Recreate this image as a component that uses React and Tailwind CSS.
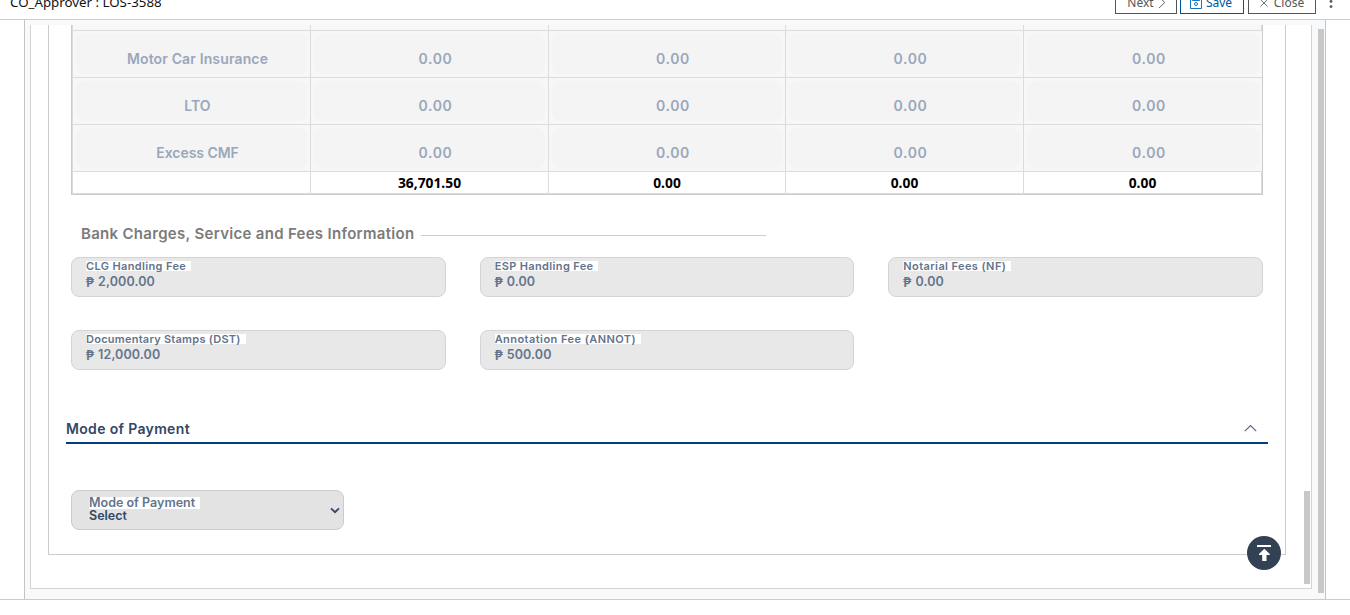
const rows = ['Motor Car Insurance', 'LTO', 'Excess CMF'];
const rowTracking = ['tracking-[0.14px]', 'tracking-[0.1px]', 'tracking-[-0.05px]'];
const totals = ['36,701.50', '0.00', '0.00', '0.00'];
const fees = [
  ['CLG Handling Fee', '2,000.00', 'tracking-[0.36px]'],
  ['ESP Handling Fee', '0.00', 'tracking-[0.36px]'],
  ['Notarial Fees (NF)', '0.00', 'tracking-[0.4px]'],
  ['Documentary Stamps (DST)', '12,000.00', 'tracking-[0.25px]'],
  ['Annotation Fee (ANNOT)', '500.00', 'tracking-[0.45px]'],
];
const columns = 'grid grid-cols-[238px_238px_237px_238px_238px]';

function Cell({ children, tracking, last }) {
  return (
    <div className={`h-full border-[#dcdcdd] bg-[#f7f7f7] px-[3px] pt-[3px] pb-[3px] ${last ? '' : 'border-r'}`}>
      <div className="h-[40px] rounded-lg bg-[#f4f4f4] pt-[14px] pl-[12px] text-center">
        <span className={`block text-[14px] leading-[22px] font-semibold text-[#9aa7bb] ${tracking}`}>{children}</span>
      </div>
    </div>
  );
}

function TopBar() {
  return (
    <header className="flex h-5 shrink-0 items-start justify-between overflow-hidden border-b border-[#cccccc] font-['Noto_Sans',sans-serif]">
      <h1 className="-mt-[10px] ml-[10px] text-[13.3px] leading-[24px] text-[#111]">CO_Approver : LOS-3588</h1>
      <div className="-mt-[10px] flex pr-[17px] text-[12px]">
        <button className="mr-[3px] flex h-6 w-[62px] items-center justify-center gap-[4px] border border-[#555] pt-px pl-px text-[#555]">
          Next
          <svg width="8" height="13" viewBox="0 0 8 13" fill="none" stroke="currentColor" strokeWidth="0.9"><path d="M1 1 6.800 6.500 1 12" /></svg>
        </button>
        <button className="mr-1 flex h-6 w-[64px] items-center justify-center gap-[4px] border border-[#005596] pt-px pr-[2px] text-[#005596]">
          <svg width="12" height="12" viewBox="0 0 12 12" fill="none" stroke="#1677bd"><path d="M.5.5h11v11H.5zM2.500.5v3h7v-3" /><circle cx="6" cy="7" r="1.500" /></svg>
          Save
        </button>
        <button className="flex h-6 w-[68px] items-center justify-center gap-[6px] border border-[#555] pt-px text-[#555]">
          <svg width="8" height="8" viewBox="0 0 8 8" stroke="currentColor" strokeWidth="0.8"><path d="m.4.4 7.2 7.2M7.6.4.4 7.6" /></svg>
          Close
        </button>
        <svg className="ml-[13px]" width="4" height="24" viewBox="0 0 4 24" fill="#555"><circle cx="2" cy="6" r="1.4" /><circle cx="2" cy="11.400" r="1.4" /><circle cx="2" cy="16.600" r="1.4" /></svg>
      </div>
    </header>
  );
}

function FeeTable() {
  return (
    <div className="ml-[22px] h-[170px] w-[1192px] border-r border-b border-l border-[#cccccc]">
      <div className="h-[169px] border-r border-b border-l border-[#dcdcdd]">
        <div className={`${columns} h-[6px] border-b border-[#dcdcdd] bg-[#f7f7f7]`}>
          {[0, 1, 2, 3].map((i) => <div key={i} className="border-r border-[#dcdcdd]" />)}
        </div>
        {rows.map((name, i) => (
          <div key={name} className={`${columns} h-[47px] border-b border-[#dcdcdd]`}>
            <Cell tracking={rowTracking[i]}>{name}</Cell>
            {[0, 1, 2, 3].map((c) => <Cell key={c} tracking="tracking-[0.6px]" last={c === 3}>0.00</Cell>)}
          </div>
        ))}
        <div className={`${columns} h-[21px] font-['Noto_Sans',sans-serif] text-[13.8px] leading-[22px] font-bold text-black`}>
          <div className="border-r border-[#dcdcdd]" />
          {totals.map((t, i) => <div key={i} className={`border-[#dcdcdd] text-center ${i < 3 ? 'border-r' : 'pr-px'}`}>{t}</div>)}
        </div>
      </div>
    </div>
  );
}

export default function App() {
  return (
    <div className="flex h-[615px] w-[1350px] flex-col overflow-hidden bg-white font-['Inter',sans-serif] whitespace-nowrap">
      <TopBar />
      <div className="flex h-[580px] border-b border-[#cccccc] pl-6">
        <div className="flex w-[1302px] border-x border-[#c4c4c4] bg-[#f8f9fb] pt-[5px] pl-[5px]">
          <div className="relative flex h-[564px] w-[1282px] shrink-0 border-x border-b border-[#d2d3d5] bg-white pl-[17px]">
            <main className="h-[530px] w-[1238px] border-x border-b border-[#cccccc]">
              <FeeTable />
              <div className="mt-[28px] ml-[32px] flex h-[22px] items-center">
                <h2 className="w-[340px] text-[15px] leading-[22px] font-semibold tracking-[0.3px] text-[#7b7b7b]">Bank Charges, Service and Fees Information</h2>
                <div className="mt-[2px] h-px w-[345px] bg-[#cccccc]" />
              </div>
              <div className="mt-[12px] ml-[22px] grid w-[1192px] grid-cols-3 gap-x-[34px] gap-y-[33px]">
                {fees.map(([label, value, tracking]) => (
                  <div key={label} className="flex h-10 flex-col items-start rounded-lg border border-[#d4d4d4] bg-[#e8e8e8] pt-[3px] pl-[14px] text-[#64748b]">
                    <span className={`h-[10px] bg-white pr-[5px] text-[11px] leading-[10px] font-semibold ${tracking}`}>{label}</span>
                    <span className="mt-[2px] flex gap-[4px] text-[12.5px] leading-[18px] font-semibold tracking-[0.1px]">
                      <span className="font-['Noto_Sans',sans-serif] text-[14px]">₱</span>
                      {value}
                    </span>
                  </div>
                ))}
              </div>
              <div className="mt-[48px] ml-[17px] flex h-[26px] w-[1202px] items-start justify-between border-b-2 border-[#003e7e]">
                <h2 className="text-[14px] leading-[22px] font-semibold tracking-[0.34px] text-[#334766]">Mode of Payment</h2>
                <svg className="mt-[6px] mr-[11px]" width="13" height="8" viewBox="0 0 13 8" fill="none" stroke="#526588" strokeWidth="1.1"><path d="M.8 7.2 6.5 1.5 12.2 7.2" /></svg>
              </div>
              <div className="mt-[46px] ml-[22px] flex h-10 w-[273px] justify-between rounded-lg border border-[#cccccc] bg-[#e3e3e3] pt-[6px] pl-[17px]">
                <div className="flex flex-col items-start">
                  <span className="h-3 bg-white pr-[5px] text-[12.5px] leading-[12px] font-semibold text-[#64748b]">Mode of Payment</span>
                  <span className="text-[12.5px] leading-[14px] font-semibold text-[#334766]">Select</span>
                </div>
                <svg className="mt-[10px] mr-[3px]" width="10" height="7" viewBox="0 0 10 7" fill="none" stroke="#334766" strokeWidth="1.8"><path d="M1 1.3 5 5.2 9 1.3" /></svg>
              </div>
            </main>
            <div className="mt-[466px] ml-[18px] h-[93px] w-[6px] shrink-0 bg-[#c8c8c8]" />
            <button aria-label="Back to top" className="absolute top-[511px] left-[1216px] flex size-[34px] items-center justify-center rounded-full bg-[#334155]">
              <svg width="14" height="16" viewBox="0 0 14 16" fill="#fff"><path d="M0 0h14v2H0zM7.300 3.800l5.500 5.200v1H9.500V16H5.200v-6H2v-1z" /></svg>
            </button>
          </div>
          <div className="mt-1 ml-[6px] h-[564px] w-[6px] shrink-0 bg-[#c8c8c8]" />
        </div>
      </div>
    </div>
  );
}
